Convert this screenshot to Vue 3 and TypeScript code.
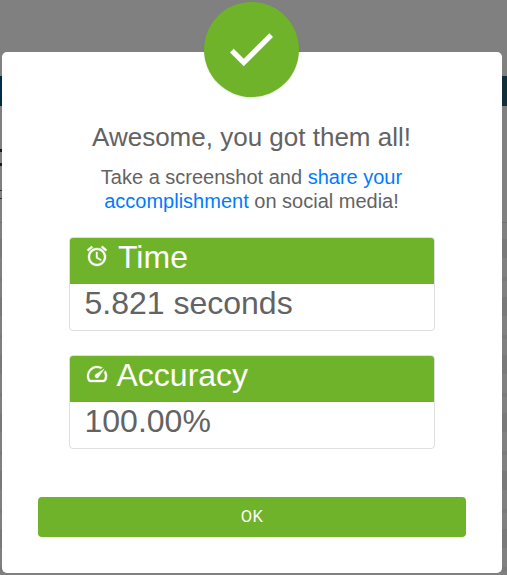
<script setup lang="ts">
interface Result {
  label: string
  value: string
  icon: 'alarm' | 'gauge'
}

const results: Result[] = [
  { label: 'Time', value: '5.821 seconds', icon: 'alarm' },
  { label: 'Accuracy', value: '100.00%', icon: 'gauge' },
]
</script>

<template>
  <div class="page">
    <div class="backdrop">
      <div class="navbar"></div>
      <div class="heading-edge"></div>
      <div class="copy-edge"></div>
      <div class="rows"></div>
    </div>
    <section class="modal" role="dialog">
      <div class="badge">
        <svg class="check" viewBox="0 0 24 24">
          <path d="M9 16.17 4.83 12l-1.42 1.41L9 19 21 7l-1.41-1.41z" />
        </svg>
      </div>
      <h4 class="title">Awesome, you got them all!</h4>
      <p class="message">
        Take a screenshot and <a class="link">share your<br />accomplishment</a> on social media!
      </p>
      <div class="cards">
        <div v-for="r in results" :key="r.label" class="card">
          <div class="card-head">
            <svg v-if="r.icon === 'alarm'" class="icon" viewBox="0 0 24 24">
              <path
                d="M22 5.72l-4.6-3.86-1.29 1.53 4.6 3.86L22 5.72zM7.88 3.39L6.6 1.86 2 5.71l1.29 1.53 4.59-3.85zM12.5 8H11v6l4.75 2.85.75-1.23-4-2.37V8zM12 4c-4.97 0-9 4.03-9 9s4.02 9 9 9c4.97 0 9-4.03 9-9s-4.03-9-9-9zm0 16c-3.87 0-7-3.13-7-7s3.13-7 7-7 7 3.13 7 7-3.13 7-7 7z"
              />
            </svg>
            <svg v-else class="icon" viewBox="0 0 24 24">
              <path
                d="M20.38 8.57l-1.23 1.85a8 8 0 0 1-.22 7.58H5.07A8 8 0 0 1 15.58 6.85l1.85-1.23A10 10 0 0 0 3.35 19a2 2 0 0 0 1.72 1h13.85a2 2 0 0 0 1.74-1 10 10 0 0 0-.27-10.44zm-9.79 6.84a2 2 0 0 0 2.83 0l5.66-8.49-8.49 5.66a2 2 0 0 0 0 2.83z"
              />
            </svg>
            <span :class="['label', r.icon]">{{ r.label }}</span>
          </div>
          <div class="card-value">{{ r.value }}</div>
        </div>
      </div>
      <button class="ok" type="button">OK</button>
    </section>
  </div>
</template>

<style>
body {
  margin: 0;
}
</style>

<style scoped>
.page {
  box-sizing: border-box;
  position: relative;
  width: 507px;
  height: 575px;
  padding: 52px 5px 2px 2px;
  overflow: hidden;
  background: #808080;
  font-family: 'Liberation Sans', Arial, sans-serif;
  color: #636363;
}
.backdrop {
  position: absolute;
  inset: 0;
  padding-top: 76px;
}
.navbar {
  height: 30px;
  background: linear-gradient(90deg, #002c47, #102f3b);
}
.heading-edge {
  box-sizing: border-box;
  width: 3px;
  height: 17px;
  margin-top: 43px;
  border-top: 3px solid #1a1a1a;
  border-bottom: 3px solid #1a1a1a;
}
.copy-edge {
  box-sizing: border-box;
  width: 2px;
  height: 9px;
  margin-top: 24px;
  border-top: 1px solid #40302f;
  border-bottom: 1px solid #40302f;
}
.rows {
  height: 353px;
  margin-top: 23px;
  border-top: 1px solid #707070;
  background: repeating-linear-gradient(#808080 0 16px, #797979 16px 35px, #808080 35px 54px, #7a7a7a 54px 58px);
}
.modal {
  box-sizing: border-box;
  position: relative;
  width: 500px;
  height: 521px;
  padding: 69px 36px 36px;
  display: flex;
  flex-direction: column;
  background: #fff;
  border-radius: 5px;
}
.badge {
  box-sizing: border-box;
  position: absolute;
  top: -50px;
  left: 202px;
  width: 95px;
  height: 95px;
  padding: 0 1px 2px 0;
  display: flex;
  align-items: center;
  justify-content: center;
  border-radius: 50%;
  background: #6fb32b;
  box-shadow: 0 1px 2px rgba(0, 0, 0, 0.1);
}
.check {
  width: 58px;
  height: 58px;
  fill: #fff;
  stroke: #fff;
  stroke-width: 0.2;
}
.title {
  margin: 0 1px 0 0;
  font-size: 26px;
  font-weight: 400;
  line-height: 32px;
  text-align: center;
  white-space: nowrap;
}
.message {
  margin: 12px 1px 0 0;
  font-size: 20px;
  line-height: 24px;
  text-align: center;
  white-space: nowrap;
}
.link {
  color: #007bff;
}
.cards {
  display: flex;
  flex-direction: column;
  gap: 24px;
  margin: 24px 31px 0;
}
.card {
  box-sizing: border-box;
  height: 94px;
  overflow: hidden;
  border: 1px solid #dfdfdf;
  border-radius: 4px;
}
.card-head {
  box-sizing: border-box;
  display: flex;
  height: 46px;
  padding-left: 15px;
  background: #6fb32b;
  color: #fff;
  font-size: 32px;
  line-height: 38px;
}
.icon {
  width: 24px;
  height: 24px;
  margin-top: 6px;
  fill: #fff;
  stroke: #fff;
  stroke-width: 0.35;
}
.label {
  margin-left: 9px;
}
.label.gauge {
  margin-left: 7.5px;
}
.card-value {
  padding-left: 14.5px;
  font-size: 32px;
  line-height: 38px;
}
.ok {
  height: 40px;
  margin-top: auto;
  padding: 0;
  border: 0;
  border-radius: 4px;
  background: #6fb32b;
  color: #fff;
  font: 16.5px/40px Roboto, sans-serif;
  letter-spacing: 0.4px;
}
</style>
